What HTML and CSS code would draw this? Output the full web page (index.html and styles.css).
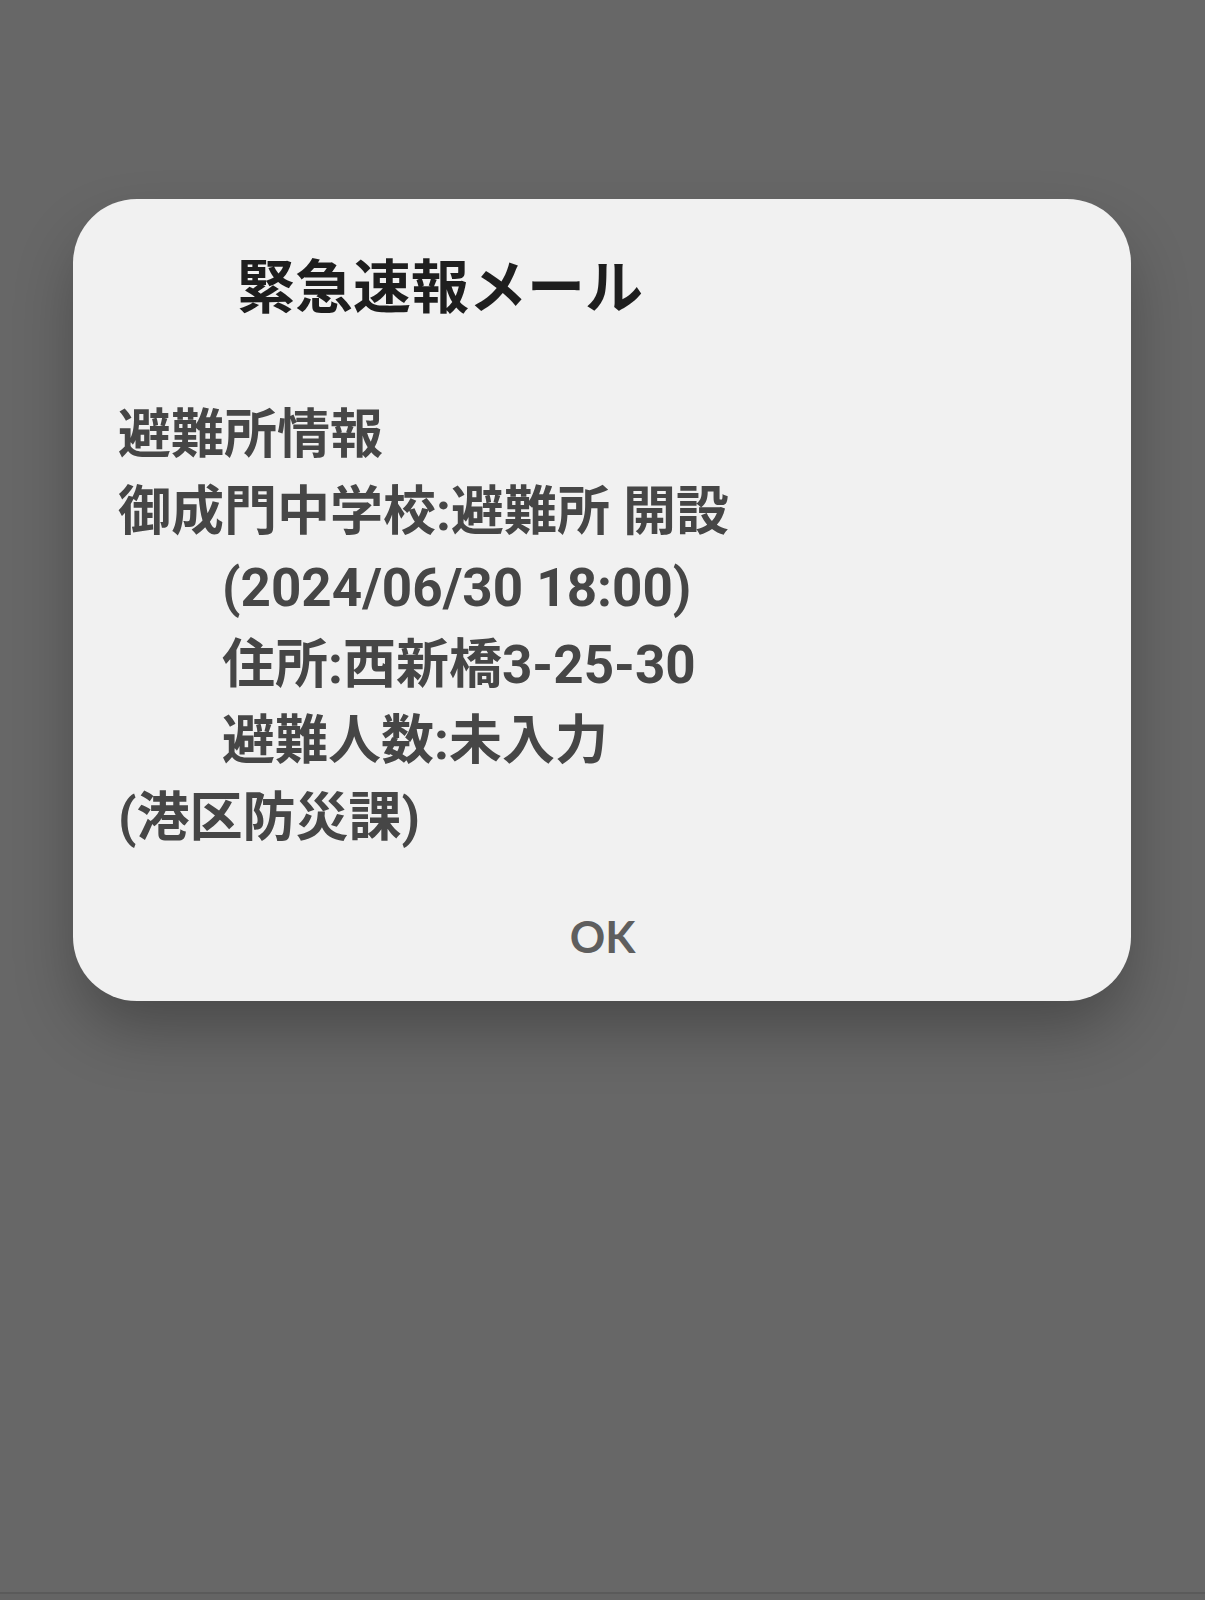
FILE: index.html
```html
<!DOCTYPE html>
<html lang="ja">
<head>
<meta charset="utf-8">
<title>緊急速報メール</title>
<link rel="stylesheet" href="styles.css">
</head>
<body>
<main class="screen">
  <section class="dialog">
    <h1 class="dialog-title">緊急速報メール</h1>
    <div class="dialog-body">
      <p class="line">避難所情報</p>
      <p class="line">御成門中学校:避難所 開設</p>
      <p class="line indent">(2024/06/30 18:00)</p>
      <p class="line indent">住所:西新橋3-25-30</p>
      <p class="line indent">避難人数:未入力</p>
      <p class="line">(港区防災課)</p>
    </div>
    <div class="dialog-actions">
      <button class="dialog-button" type="button">OK</button>
    </div>
  </section>
</main>
<div class="nav-edge"></div>
</body>
</html>
```
FILE: styles.css
```css
html, body {
  margin: 0;
  padding: 0;
}

body {
  width: 1205px;
  height: 1600px;
  background: #676767;
  font-family: Roboto, "Noto Sans CJK JP", "Noto Sans", sans-serif;
  display: flex;
  flex-direction: column;
  overflow: hidden;
}

.screen {
  flex: 1;
  padding-top: 199px;
}

.dialog {
  margin-left: 73px;
  width: 1058px;
  height: 802px;
  box-sizing: border-box;
  background: #f1f1f1;
  border-radius: 64px;
  box-shadow: 0 32px 64px -6px rgba(0, 0, 0, 0.3);
  padding: 49px 44px 0 45px;
}

.dialog-title {
  margin: 0;
  padding-left: 119px;
  font-size: 58px;
  line-height: 80px;
  font-weight: 700;
  color: #1e1e1e;
}

.dialog-body {
  margin-top: 69px;
  font-size: 53px;
  line-height: 76.5px;
  font-weight: 700;
  color: #464646;
}

.line {
  margin: 0;
  white-space: nowrap;
}

.indent {
  padding-left: 104px;
}

.dialog-actions {
  margin-top: 40px;
  display: flex;
  justify-content: center;
}

.dialog-button {
  border: 0;
  background: transparent;
  padding: 0;
  height: 80px;
  font-family: Lato, Roboto, sans-serif;
  font-size: 44px;
  font-weight: 700;
  line-height: 80px;
  color: #5e5e5e;
}

.nav-edge {
  height: 6px;
  border-top: 2px solid #5a5a5a;
  background: #646464;
}
```
